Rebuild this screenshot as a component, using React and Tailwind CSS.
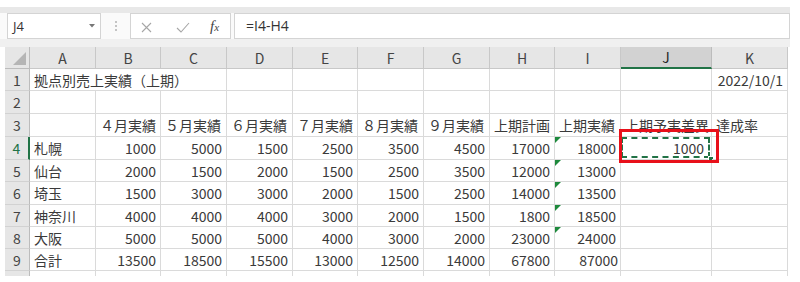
import React from 'react'

const letters = ['A', 'B', 'C', 'D', 'E', 'F', 'G', 'H', 'I', 'J', 'K']
const colW = ['w-[66px]', 'w-[65px]', 'w-[66px]', 'w-[66px]', 'w-[65px]', 'w-[66px]', 'w-[66px]', 'w-[65px]', 'w-[66px]', 'w-[91px]', 'w-[76px]']

const months = ['４月実績', '５月実績', '６月実績', '７月実績', '８月実績', '９月実績', '上期計画', '上期実績', '上期予実差異', '達成率']

const data = [
  { n: 4, h: 'h-[23px]', name: '札幌', vals: [1000, 5000, 1500, 2500, 3500, 4500, 17000, 18000], diff: 1000, flag: true },
  { n: 5, h: 'h-[22px]', name: '仙台', vals: [2000, 1500, 2000, 1500, 2500, 3500, 12000, 13000], flag: true },
  { n: 6, h: 'h-[23px]', name: '埼玉', vals: [1500, 3000, 3000, 2000, 1500, 2500, 14000, 13500], flag: true },
  { n: 7, h: 'h-[22px]', name: '神奈川', vals: [4000, 4000, 4000, 3000, 2000, 1500, 1800, 18500], flag: true },
  { n: 8, h: 'h-[22px]', name: '大阪', vals: [5000, 5000, 5000, 4000, 3000, 2000, 23000, 24000], flag: true },
  { n: 9, h: 'h-[22px]', name: '合計', vals: [13500, 18500, 15500, 13000, 12500, 14000, 67800, 87000], flag: false },
]

const grid = 'border-r border-b border-[#dadada]'

const RowHead = ({ n, h, active }) => (
  <div
    className={`w-[25px] ${h} shrink-0 flex items-center justify-center bg-[#e6e6e6] border-b border-[#d2d2d2] ${
      active ? 'border-r-2 border-r-[#217346] text-[#217346] bg-[#dcdcdc]' : 'border-r border-r-[#bcbcbc] text-[#444]'
    }`}
  >
    {n}
  </div>
)

const Cell = ({ w, h, right, children, className = '' }) => (
  <div
    className={`${w} ${h} shrink-0 relative flex items-center px-[4px] whitespace-nowrap ${grid} ${
      right ? 'justify-end' : 'justify-start'
    } ${className}`}
  >
    {children}
  </div>
)

const FormulaBar = () => (
  <div className="mt-[7px] w-[790px] font-['Open_Sans',sans-serif]">
    <div className="h-[6px] bg-[#e8e8e8]" />
    <div className="h-[26px] flex bg-[#fafafa] pl-[7px]">
      <div className="w-[94px] bg-white border border-[#d4d4d4] flex items-center justify-between pl-[5px] pr-[5px]">
        <span className="text-[13px] text-[#333]">J4</span>
        <svg width="6" height="4" viewBox="0 0 6 4">
          <path d="M0 0 L6 0 L3 3.5 Z" fill="#777" />
        </svg>
      </div>
      <div className="w-[29px] flex items-center justify-center">
        <div className="flex flex-col gap-[2px]">
          <span className="w-[2px] h-[2px] bg-[#c4c4c4]" />
          <span className="w-[2px] h-[2px] bg-[#c4c4c4]" />
          <span className="w-[2px] h-[2px] bg-[#c4c4c4]" />
        </div>
      </div>
      <div className="w-[101px] bg-white border border-[#d4d4d4] flex items-center pl-[10px]">
        <svg width="11" height="11" viewBox="0 0 11 11" className="mt-[2px]">
          <path d="M1 1 L10 10 M10 1 L1 10" stroke="#a6a6a6" strokeWidth="1.1" fill="none" />
        </svg>
        <svg width="14" height="11" viewBox="0 0 14 11" className="ml-[24px] mt-[3px]">
          <path d="M1 6 L5 10 L13 1" stroke="#a6a6a6" strokeWidth="1.1" fill="none" />
        </svg>
        <span className="ml-[20px] font-['Liberation_Serif',serif] italic text-[#444] text-[15px] leading-none">
          f<span className="text-[11px]">x</span>
        </span>
      </div>
      <div className="ml-[3px] flex-1 bg-white border border-[#d4d4d4] flex items-center pl-[11px]">
        <span className="text-[14px] text-[#333]">=I4-H4</span>
      </div>
    </div>
    <div className="h-[8px] bg-[#f0f0f0]" />
  </div>
)

export default function App() {
  return (
    <div className="w-[800px] h-[282px] bg-white overflow-hidden relative font-['Noto_Sans_CJK_JP',sans-serif] text-[14px] leading-[20px] text-[#3a3a3a]">
      <FormulaBar />

      <div className="pl-[5px]">
        {/* column headers */}
        <div className="flex h-[22px]">
          <div className="w-[25px] shrink-0 bg-[#e6e6e6] border-r border-b border-[#bcbcbc] flex items-end justify-end pr-[3px] pb-[3px]">
            <svg width="13" height="13" viewBox="0 0 13 13">
              <path d="M13 0 L13 13 L0 13 Z" fill="#b5b5b5" />
            </svg>
          </div>
          {letters.map((l, i) => (
            <div
              key={l}
              className={`${colW[i]} shrink-0 flex items-center justify-center ${
                l === 'J'
                  ? 'bg-[#d2d2d2] border-r border-r-[#bcbcbc] border-b-2 border-b-[#217346] text-[#262626]'
                  : 'bg-[#e6e6e6] border-r border-b border-[#c8c8c8] text-[#444]'
              }`}
            >
              {l}
            </div>
          ))}
        </div>

        {/* row 1 */}
        <div className="flex">
          <RowHead n={1} h="h-[22px]" />
          <Cell w="w-[197px]" h="h-[22px]">拠点別売上実績（上期）</Cell>
          {colW.slice(3, 10).map((w, i) => (
            <Cell key={i} w={w} h="h-[22px]" />
          ))}
          <Cell w="w-[76px]" h="h-[22px]" right>2022/10/1</Cell>
        </div>

        {/* row 2 */}
        <div className="flex">
          <RowHead n={2} h="h-[23px]" />
          {colW.map((w, i) => (
            <Cell key={i} w={w} h="h-[23px]" />
          ))}
        </div>

        {/* row 3 */}
        <div className="flex">
          <RowHead n={3} h="h-[23px]" />
          <Cell w={colW[0]} h="h-[23px]" />
          {months.map((m, i) => (
            <Cell key={m} w={colW[i + 1]} h="h-[23px]">{m}</Cell>
          ))}
        </div>

        {/* data rows */}
        {data.map((r) => (
          <div key={r.n} className="flex">
            <RowHead n={r.n} h={r.h} active={r.n === 4} />
            <Cell w={colW[0]} h={r.h}>{r.name}</Cell>
            {r.vals.map((v, i) => (
              <Cell key={i} w={colW[i + 1]} h={r.h} right className={i === 7 && !r.flag ? 'pr-[2px]' : ''}>
                {i === 7 && r.flag && (
                  <span className="absolute top-0 left-0 w-0 h-0 border-t-[6px] border-t-[#1e8a3c] border-r-[6px] border-r-transparent" />
                )}
                {v}
              </Cell>
            ))}
            <Cell w={colW[9]} h={r.h} right>
              {r.diff && (
                <>
                  <span className="absolute top-0 left-0 right-[1px] bottom-[1px] border-2 border-dashed border-[#217346]" />
                  <span className="absolute right-[-3px] bottom-[-3px] w-[6px] h-[6px] bg-[#217346] border border-white" />
                  <span className="relative pr-[3px]">{r.diff}</span>
                </>
              )}
            </Cell>
            <Cell w={colW[10]} h={r.h} />
          </div>
        ))}

        {/* partial row */}
        <div className="flex h-[5px]">
          <div className="w-[25px] shrink-0 bg-[#e6e6e6] border-r border-[#bcbcbc]" />
          {colW.map((w, i) => (
            <div key={i} className={`${w} shrink-0 border-r border-[#dadada]`} />
          ))}
        </div>
      </div>

      {/* annotation box around J4 */}
      <div className="absolute left-[619px] top-[129px] w-[100px] h-[34px] border-[3px] border-[#e8101a]" />
    </div>
  )
}
